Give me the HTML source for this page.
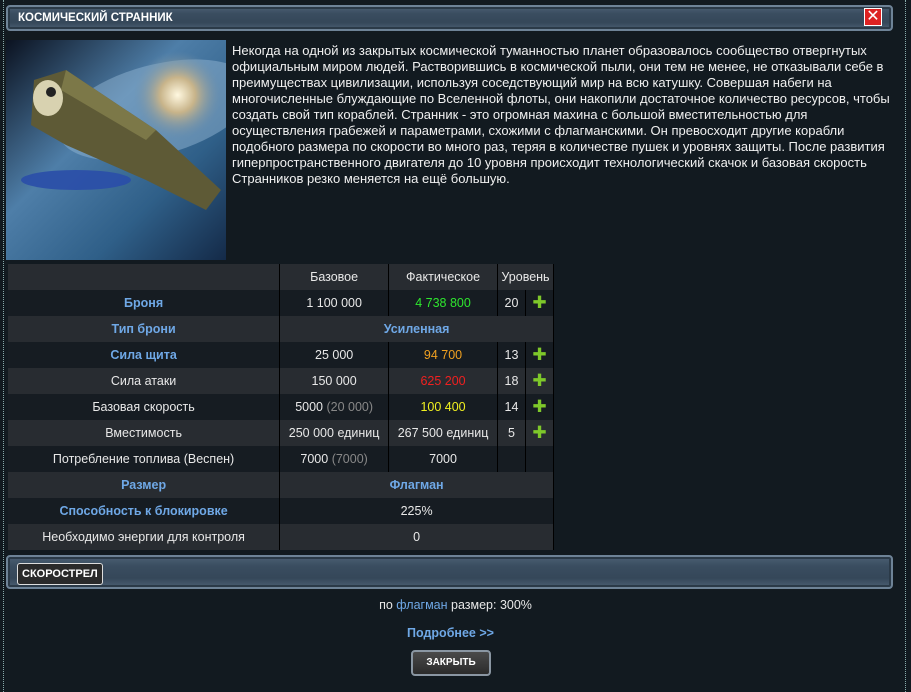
<!DOCTYPE html>
<html><head><meta charset="utf-8">
<style>
*{margin:0;padding:0;box-sizing:border-box}
body{width:911px;height:692px;background:#0f151a;font-family:"Liberation Sans","DejaVu Sans",sans-serif;color:#e8e8e8;font-size:12px;position:relative;overflow:hidden}
.win{position:absolute;left:0;top:0;width:911px;height:692px;background:#121a20}
.bl{position:absolute;top:0;width:1px;height:692px;border-left:1px dotted #8aa}
.bar{position:absolute;left:6px;width:887px;background:linear-gradient(#4a5e72,#3a4d60 30%,#354759 70%,#4a5e72);border:2px solid #6e8397;border-radius:4px;box-shadow:inset 0 0 0 2px #2b3a48}
.title{top:5px;height:26px;color:#fff;font-weight:bold;font-size:11.5px;line-height:22px;padding-left:10px}
.close{position:absolute;left:864px;top:8px;width:18px;height:18px;background:#d22;border:1px solid #fff;color:#fff;font-weight:bold;font-size:16px;line-height:16px;text-align:center}
.img{position:absolute;left:6px;top:40px;width:220px;height:220px}
.desc{position:absolute;left:232px;top:43px;line-height:16px;font-size:13px;white-space:nowrap;color:#f0f0f0;letter-spacing:0}
table{position:absolute;left:8px;top:264px;border-collapse:collapse;width:546px}
td{height:26px;text-align:center;font-size:12.5px;padding:0;border-right:1px solid #000}
tr.l td{background:#282c31}
tr.d td{background:#161c22}
.b{color:#6fa8e6;font-weight:bold}
.plus{color:#7ec82a;font-weight:bold;font-size:17px}
.g{color:#888}
.rf{top:555px;height:34px}
.tab{position:absolute;left:9px;top:6px;height:22px;padding:0 4px;background:#2a2a2a;border:1px solid #ddd;border-radius:3px;color:#fff;font-weight:bold;font-size:11px;line-height:20px}
.c{position:absolute;left:0;width:902px;text-align:center;font-size:12.5px}
.btn{position:absolute;left:411px;top:650px;width:80px;height:26px;background:linear-gradient(#4a4a4a,#2b2b2b);border:2px solid #8a96a2;border-radius:4px;color:#fff;font-weight:bold;font-size:10px;line-height:22px;text-align:center}
</style></head><body>
<div class="win">
<div class="bl" style="left:3px"></div><div class="bl" style="left:905px"></div>
<div class="bar title">КОСМИЧЕСКИЙ СТРАННИК</div>
<div class="close">✕</div>
<svg class="img" viewBox="0 0 220 220">
<defs><radialGradient id="ga" cx="0.78" cy="0.25" r="0.2"><stop offset="0" stop-color="#fff8e0"/><stop offset="0.4" stop-color="#c8b48a"/><stop offset="1" stop-color="#6f8fa8" stop-opacity="0"/></radialGradient>
<linearGradient id="bg" x1="0" y1="0" x2="1" y2="1"><stop offset="0" stop-color="#0b1220"/><stop offset="0.4" stop-color="#4e7ea8"/><stop offset="0.7" stop-color="#2f5f88"/><stop offset="1" stop-color="#142a48"/></linearGradient></defs>
<rect width="220" height="220" fill="url(#bg)"/>
<ellipse cx="150" cy="70" rx="100" ry="45" fill="#8fb4d2" opacity=".5" transform="rotate(-15 150 70)"/>
<rect width="220" height="220" fill="url(#ga)"/>
<ellipse cx="70" cy="140" rx="55" ry="10" fill="#2a4ea8" opacity=".9"/>
<path d="M28 40 L60 30 L150 90 L215 150 L200 170 L140 140 L60 105 L25 85 Z" fill="#5e5a36"/>
<path d="M60 30 L150 90 L140 100 L55 50 Z" fill="#7c7848"/>
<ellipse cx="42" cy="58" rx="15" ry="18" fill="#d8d2b0"/>
<circle cx="45" cy="52" r="5" fill="#222"/>
</svg>
<div class="desc">Некогда на одной из закрытых космической туманностью планет образовалось сообщество отвергнутых<br>официальным миром людей. Растворившись в космической пыли, они тем не менее, не отказывали себе в<br>преимуществах цивилизации, используя соседствующий мир на всю катушку. Совершая набеги на<br>многочисленные блуждающие по Вселенной флоты, они накопили достаточное количество ресурсов, чтобы<br>создать свой тип кораблей. Странник - это огромная махина с большой вместительностью для<br>осуществления грабежей и параметрами, схожими с флагманскими. Он превосходит другие корабли<br>подобного размера по скорости во много раз, теряя в количестве пушек и уровнях защиты. После развития<br>гиперпространственного двигателя до 10 уровня происходит технологический скачок и базовая скорость<br>Странников резко меняется на ещё большую.</div>
<table>
<colgroup><col style="width:272px"><col style="width:109px"><col style="width:109px"><col style="width:28px"><col style="width:28px"></colgroup>
<tr class="l"><td></td><td>Базовое</td><td>Фактическое</td><td colspan="2">Уровень</td></tr>
<tr class="d"><td class="b">Броня</td><td>1 100 000</td><td style="color:#2ee62e">4 738 800</td><td>20</td><td class="plus">✚</td></tr>
<tr class="l"><td class="b">Тип брони</td><td colspan="4" class="b">Усиленная</td></tr>
<tr class="d"><td class="b">Сила щита</td><td>25 000</td><td style="color:#f0a020">94 700</td><td>13</td><td class="plus">✚</td></tr>
<tr class="l"><td>Сила атаки</td><td>150 000</td><td style="color:#f02020">625 200</td><td>18</td><td class="plus">✚</td></tr>
<tr class="d"><td>Базовая скорость</td><td>5000 <span class="g">(20 000)</span></td><td style="color:#f0f020">100 400</td><td>14</td><td class="plus">✚</td></tr>
<tr class="l"><td>Вместимость</td><td>250 000 единиц</td><td>267 500 единиц</td><td>5</td><td class="plus">✚</td></tr>
<tr class="d"><td>Потребление топлива (Веспен)</td><td>7000 <span class="g">(7000)</span></td><td>7000</td><td></td><td></td></tr>
<tr class="l"><td class="b">Размер</td><td colspan="4" class="b">Флагман</td></tr>
<tr class="d"><td class="b">Способность к блокировке</td><td colspan="4">225%</td></tr>
<tr class="l"><td>Необходимо энергии для контроля</td><td colspan="4">0</td></tr>
</table>
<div class="bar rf"><div class="tab">СКОРОСТРЕЛ</div></div>
<div class="c" style="top:598px;width:911px">по <span style="color:#6fa8e6">флагман</span> размер: 300%</div>
<div class="c b" style="top:626px;width:901px">Подробнее &gt;&gt;</div>
<div class="btn">ЗАКРЫТЬ</div>
</div>
</body></html>
